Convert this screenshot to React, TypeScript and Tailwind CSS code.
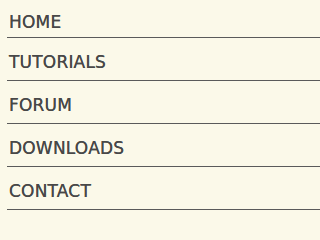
import React from 'react';

const links = ['HOME', 'TUTORIALS', 'FORUM', 'DOWNLOADS', 'CONTACT'];

export default function App() {
  return (
    <div className="w-full min-h-screen overflow-hidden bg-[#fbf9e9]" style={{ fontFamily: '"DejaVu Sans", sans-serif' }}>
      <ul className="pl-[7px]">
        {links.map((label, i) => (
          <li
            key={label}
            className={
              i === 0
                ? 'border-b border-[#5a5a5a] pl-[2px] pt-[12px] pb-[4px]'
                : 'border-b border-[#5a5a5a] pl-[2px] pt-[14px] pb-[7px]'
            }
          >
            <a href="#" className="block text-[17px] leading-[21px] tracking-[0.2px] text-[#484848] [text-shadow:0_0_0.6px_#484848]">
              {label}
            </a>
          </li>
        ))}
      </ul>
    </div>
  );
}
